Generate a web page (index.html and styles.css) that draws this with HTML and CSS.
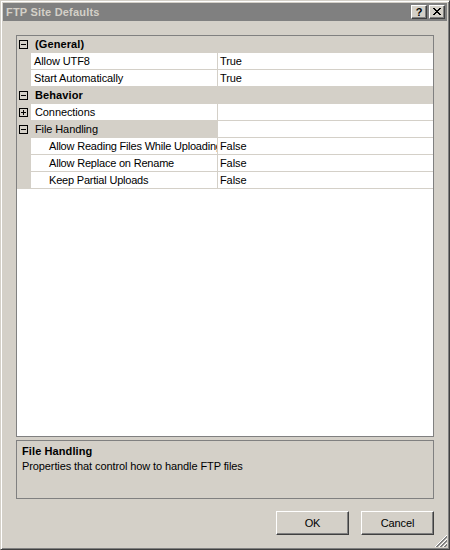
FILE: index.html
```html
<!DOCTYPE html>
<html>
<head>
<meta charset="utf-8">
<link rel="stylesheet" href="styles.css">
</head>
<body>
<div class="window">
  <div class="titlebar">
    <span class="title">FTP Site Defaults</span>
    <div class="tbtns">
      <div class="tbtn help">?</div>
      <div class="tbtn">
        <svg width="8" height="7" viewBox="0 0 8 7" shape-rendering="crispEdges"><path d="M0 0h2v1h-2zM6 0h2v1h-2zM1 1h2v1h-2zM5 1h2v1h-2zM2 2h4v1h-4zM3 3h2v1h-2zM2 4h4v1h-4zM1 5h2v1h-2zM5 5h2v1h-2zM0 6h2v1h-2zM6 6h2v1h-2z" fill="#000"/></svg>
      </div>
    </div>
  </div>
  <div class="content">
    <div class="grid">
      <div class="row cat">
        <div class="margin"><svg class="box" width="9" height="9" viewBox="0 0 9 9" shape-rendering="crispEdges"><rect x="0.5" y="0.5" width="8" height="8" fill="none" stroke="#000"/><path d="M2 4.5h5" stroke="#000"/></svg></div>
        <div class="catlabel">(General)</div>
      </div>
      <div class="row">
        <div class="margin"></div>
        <div class="name">Allow UTF8</div>
        <div class="value">True</div>
      </div>
      <div class="row">
        <div class="margin"></div>
        <div class="name">Start Automatically</div>
        <div class="value">True</div>
      </div>
      <div class="row cat">
        <div class="margin"><svg class="box" width="9" height="9" viewBox="0 0 9 9" shape-rendering="crispEdges"><rect x="0.5" y="0.5" width="8" height="8" fill="none" stroke="#000"/><path d="M2 4.5h5" stroke="#000"/></svg></div>
        <div class="catlabel">Behavior</div>
      </div>
      <div class="row">
        <div class="margin"><svg class="box" width="9" height="9" viewBox="0 0 9 9" shape-rendering="crispEdges"><rect x="0.5" y="0.5" width="8" height="8" fill="none" stroke="#000"/><path d="M2 4.5h5M4.5 2v5" stroke="#000"/></svg></div>
        <div class="name grp">Connections</div>
        <div class="value"></div>
      </div>
      <div class="row">
        <div class="margin"><svg class="box" width="9" height="9" viewBox="0 0 9 9" shape-rendering="crispEdges"><rect x="0.5" y="0.5" width="8" height="8" fill="none" stroke="#000"/><path d="M2 4.5h5" stroke="#000"/></svg></div>
        <div class="name grp selected">File Handling</div>
        <div class="value"></div>
      </div>
      <div class="row">
        <div class="margin"></div>
        <div class="name sub">Allow Reading Files While Uploading</div>
        <div class="value">False</div>
      </div>
      <div class="row">
        <div class="margin"></div>
        <div class="name sub">Allow Replace on Rename</div>
        <div class="value">False</div>
      </div>
      <div class="row">
        <div class="margin"></div>
        <div class="name sub">Keep Partial Uploads</div>
        <div class="value">False</div>
      </div>
    </div>
    <div class="desc">
      <div class="desc-title">File Handling</div>
      <div class="desc-text">Properties that control how to handle FTP files</div>
    </div>
    <div class="buttons">
      <div class="btn">OK</div>
      <div class="btn">Cancel</div>
    </div>
  </div>
  <svg class="grip" width="12" height="12" viewBox="0 0 12 12">
    <path d="M12 0L0 12M12 4L4 12M12 8L8 12" stroke="#ffffff" stroke-width="1"/>
    <path d="M12 1L1 12M12 2L2 12M12 5L5 12M12 6L6 12M12 9L9 12M12 10L10 12" stroke="#808080" stroke-width="1"/>
  </svg>
</div>
</body>
</html>
```

FILE: styles.css
```css
html, body {
  margin: 0;
  padding: 0;
}

body {
  width: 450px;
  height: 550px;
  background: #d4d0c8;
  font-family: "Liberation Sans", Arial, sans-serif;
  font-size: 11px;
  letter-spacing: -0.1px;
  color: #000;
}

.window {
  position: relative;
  box-sizing: border-box;
  width: 450px;
  height: 550px;
  background: #d4d0c8;
  border: 1px solid;
  border-color: #d4d0c8 #404040 #404040 #d4d0c8;
  box-shadow: inset 1px 1px #ffffff, inset -1px -1px #808080;
  padding: 2px;
  display: flex;
  flex-direction: column;
}

.titlebar {
  height: 18px;
  flex: none;
  background: #808080;
  display: flex;
  align-items: center;
  justify-content: space-between;
  padding: 0 2px 0 3px;
}

.title {
  color: #d4d0c8;
  font-weight: bold;
  font-size: 11px;
  letter-spacing: 0.2px;
}

.tbtns {
  display: flex;
  gap: 2px;
}

.tbtn {
  box-sizing: border-box;
  width: 16px;
  height: 14px;
  background: #d4d0c8;
  border: 1px solid;
  border-color: #ffffff #404040 #404040 #ffffff;
  box-shadow: inset -1px -1px #808080;
  display: flex;
  align-items: center;
  justify-content: center;
}

.tbtn svg {
  display: block;
  margin-top: -1px;
}

.help {
  font-weight: bold;
  font-size: 11px;
  line-height: 12px;
  padding-bottom: 1px;
}

.content {
  flex: 1;
  display: flex;
  flex-direction: column;
  padding: 14px 13px 12px 13px;
}

.grid {
  box-sizing: border-box;
  height: 402px;
  border: 1px solid #808080;
  background: #ffffff;
}

.row {
  display: grid;
  grid-template-columns: 14px 186px 1fr;
  height: 17px;
}

.margin {
  background: #d4d0c8;
  display: flex;
  align-items: center;
  padding-left: 2px;
}

.box {
  display: block;
}

.name {
  box-sizing: border-box;
  height: 17px;
  line-height: 15px;
  padding-top: 1px;
  padding-left: 3px;
  border-bottom: 1px solid #d4d0c8;
  white-space: nowrap;
  overflow: hidden;
  text-overflow: clip;
}

.name.grp {
  padding-left: 4px;
}

.name.sub {
  padding-left: 18px;
  letter-spacing: -0.2px;
}

.name.selected {
  background: #d4d0c8;
}

.value {
  box-sizing: border-box;
  height: 17px;
  line-height: 15px;
  padding-top: 1px;
  padding-left: 2px;
  border-left: 1px solid #d4d0c8;
  border-bottom: 1px solid #d4d0c8;
}

.cat {
  background: #d4d0c8;
}

.catlabel {
  grid-column: 2 / 4;
  font-weight: bold;
  letter-spacing: 0.1px;
  line-height: 17px;
  padding-left: 4px;
}

.desc {
  box-sizing: border-box;
  margin-top: 3px;
  height: 59px;
  border: 1px solid #808080;
  padding: 3px 5px;
}

.desc-title {
  font-weight: bold;
  letter-spacing: 0.1px;
  line-height: 15px;
}

.desc-text {
  line-height: 15px;
}

.buttons {
  margin-top: 12px;
  display: flex;
  justify-content: flex-end;
  gap: 12px;
}

.btn {
  box-sizing: border-box;
  width: 73px;
  height: 24px;
  border: 1px solid;
  border-color: #ffffff #404040 #404040 #ffffff;
  box-shadow: inset -1px -1px #808080;
  display: flex;
  align-items: center;
  justify-content: center;
}

.grip {
  position: absolute;
  right: 2px;
  bottom: 2px;
  display: block;
}
```
